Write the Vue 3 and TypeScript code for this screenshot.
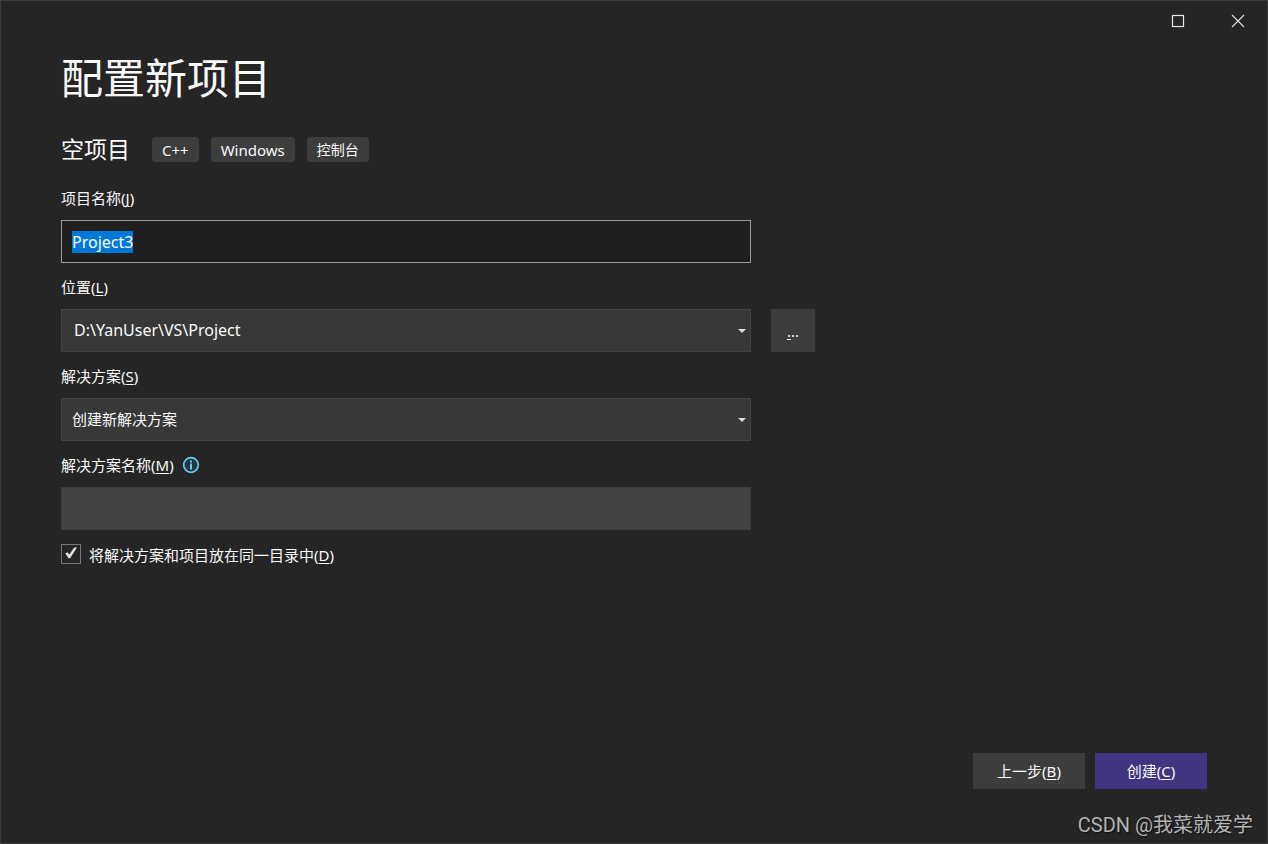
<script setup lang="ts">
import { onMounted, ref } from 'vue'

interface Tag {
  text: string
  latin: boolean
}

const tags: Tag[] = [
  { text: 'C++', latin: true },
  { text: 'Windows', latin: true },
  { text: '控制台', latin: false },
]
const projectName = ref('Project3')
const location = ref('D:\\YanUser\\VS\\Project')
const solution = ref('创建新解决方案')
const solutionName = ref('')
const sameDirectory = ref(true)
const nameInput = ref<HTMLInputElement | null>(null)

onMounted(() => {
  nameInput.value?.focus()
  nameInput.value?.select()
})
</script>

<template>
  <div class="window">
    <header class="titlebar">
      <button class="caption" type="button" aria-label="最大化">
        <svg width="14" height="14" viewBox="0 0 14 14"><rect x="1.5" y="1.5" width="11" height="11" fill="none" stroke="#e8e8e8" stroke-width="1.2" /></svg>
      </button>
      <button class="caption" type="button" aria-label="关闭">
        <svg width="14" height="14" viewBox="0 0 14 14"><path d="M1 1 13 13M13 1 1 13" fill="none" stroke="#e0e0e0" stroke-width="1.1" /></svg>
      </button>
    </header>

    <main class="content">
      <h1>配置新项目</h1>
      <div class="template">
        <h2>空项目</h2>
        <ul class="tags">
          <li v-for="tag in tags" :key="tag.text" :class="{ latin: tag.latin }">{{ tag.text }}</li>
        </ul>
      </div>

      <form class="form" @submit.prevent>
        <div class="field">
          <label for="name">项目名称(<u>J</u>)</label>
          <input id="name" ref="nameInput" v-model="projectName" class="box name" type="text" spellcheck="false" />
        </div>

        <div class="field">
          <label for="location">位置(<u>L</u>)</label>
          <div class="row">
            <div class="combo">
              <select id="location" v-model="location" class="box path">
                <option>D:\YanUser\VS\Project</option>
              </select>
              <svg class="arrow" width="8" height="4" viewBox="0 0 8 4"><path d="M0 0H8L4 4Z" fill="#dedede" /></svg>
            </div>
            <button class="browse" type="button" aria-label="浏览"><span><u>.</u>..</span></button>
          </div>
        </div>

        <div class="field">
          <label for="solution">解决方案(<u>S</u>)</label>
          <div class="combo">
            <select id="solution" v-model="solution" class="box">
              <option>创建新解决方案</option>
            </select>
            <svg class="arrow" width="8" height="4" viewBox="0 0 8 4"><path d="M0 0H8L4 4Z" fill="#dedede" /></svg>
          </div>
        </div>

        <div class="field">
          <div class="label-row">
            <label for="solution-name">解决方案名称(<u>M</u>)</label>
            <svg width="18" height="18" viewBox="0 0 18 18">
              <circle cx="9" cy="9" r="7.3" fill="#27363d" stroke="#65c8ee" stroke-width="1.7" />
              <path d="M8 4.5h2v2H8zM8 7.5h2v6H8z" fill="#65c8ee" />
            </svg>
          </div>
          <input id="solution-name" v-model="solutionName" class="box disabled" type="text" disabled />
        </div>

        <div class="check">
          <span class="tick">
            <input id="same-dir" v-model="sameDirectory" type="checkbox" />
            <svg v-if="sameDirectory" class="mark" width="12" height="12" viewBox="0 0 12 12"><path d="M0.3 6.6 2.4 5.2 4.3 7.6 9.2 0.6H12L5.1 11.2H3.5Z" fill="#e2e2e2" /></svg>
          </span>
          <label for="same-dir">将解决方案和项目放在同一目录中(<u>D</u>)</label>
        </div>
      </form>
    </main>

    <footer class="actions">
      <button class="action" type="button">上一步(<u>B</u>)</button>
      <button class="action primary" type="button">创建(<u>C</u>)</button>
    </footer>
    <p class="watermark">CSDN @我菜就爱学</p>
  </div>
</template>

<style>
body {
  background: #252525;
}
</style>

<style scoped>
* {
  box-sizing: border-box;
}

.window {
  display: flex;
  flex-direction: column;
  min-height: 100vh;
  border: 1px solid #3d3d3d;
  background: #252525;
  color: #fafafa;
  font-family: "Noto Sans", "Noto Sans CJK SC", sans-serif;
  font-size: 15px;
  line-height: 20px;
}

button,
input,
select {
  margin: 0;
  border: 0;
  border-radius: 0;
  color: inherit;
  font: inherit;
}

u {
  text-underline-offset: 2px;
  text-decoration-thickness: 1px;
}

svg {
  display: block;
}

.titlebar {
  display: flex;
  justify-content: flex-end;
  height: 40px;
  margin-right: -1px;
}

.caption {
  display: grid;
  place-items: center;
  width: 60px;
  background: none;
}

.content {
  flex: 1;
  padding: 8px 60px 0;
}

h1 {
  margin: 0;
  font-size: 42px;
  font-weight: 400;
  line-height: 58px;
}

.template {
  display: flex;
  align-items: center;
  gap: 22px;
  margin-top: 26px;
}

h2 {
  margin: 0;
  font-size: 23px;
  font-weight: 400;
  line-height: 32px;
}

.tags {
  display: flex;
  gap: 12px;
  margin: 0;
  padding: 0;
  list-style: none;
}

.tags li {
  height: 25px;
  padding: 0 10px;
  border-radius: 4px;
  background: #3d3d3d;
  font-size: 14px;
  line-height: 26px;
}

.tags .latin {
  font-size: 15px;
}

.form {
  display: flex;
  flex-direction: column;
  gap: 15px;
  max-width: 690px;
  margin-top: 24px;
}

.field {
  display: flex;
  flex-direction: column;
  gap: 13px;
}

.field label {
  line-height: 18px;
}

.label-row {
  display: flex;
  align-items: center;
  gap: 8px;
}

.box {
  display: block;
  width: 100%;
  height: 43px;
  padding: 0 10px 2px;
  border: 1px solid #434343;
  outline: none;
  background: #383838;
  appearance: none;
}

.name {
  padding-bottom: 0;
  border-color: #999;
  background: #1f1f1f;
  font-size: 16px;
}

.name::selection {
  background: #0078d7;
  color: #fff;
}

.path {
  padding-left: 12px;
  font-size: 16px;
}

.disabled {
  border-color: #3d3d3d;
  background: #434343;
}

.row {
  display: flex;
  gap: 20px;
  margin-right: -64px;
}

.combo {
  position: relative;
  flex: 1;
}

.arrow {
  position: absolute;
  top: 20px;
  right: 5px;
  pointer-events: none;
}

.browse {
  width: 44px;
  padding: 0;
  background: #3d3d3d;
}

.check {
  display: flex;
  gap: 8px;
  margin-top: -1px;
}

.tick {
  position: relative;
  width: 20px;
  height: 20px;
}

.tick input {
  display: block;
  width: 20px;
  height: 20px;
  border: 1px solid #757575;
  background: #252525;
  appearance: none;
}

.mark {
  position: absolute;
  top: 3px;
  left: 4px;
  pointer-events: none;
}

.check label {
  padding-top: 1px;
}

.actions {
  display: flex;
  justify-content: flex-end;
  gap: 10px;
  padding: 0 60px;
}

.action {
  width: 112px;
  height: 36px;
  padding: 0;
  background: #3d3d3d;
}

.primary {
  background: #413480;
}

.watermark {
  margin: 21px 14px 3px;
  color: #b4b4b4;
  font-family: Roboto, "Noto Sans CJK SC", sans-serif;
  font-size: 20px;
  line-height: 30px;
  text-align: right;
  text-shadow: 1px 1px 1px #111;
}
</style>
